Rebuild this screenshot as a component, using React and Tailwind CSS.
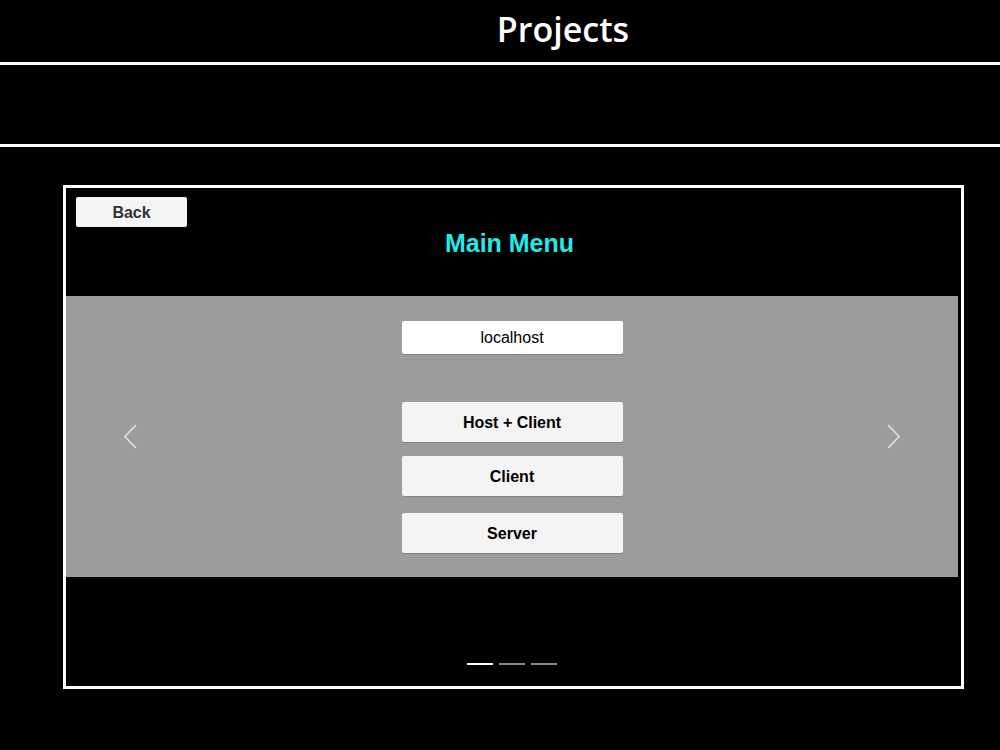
import React from "react";

function Chevron({ dir }) {
  // thin carousel arrow
  return (
    <svg width="14" height="25" viewBox="0 0 14 25" fill="none" className="shrink-0">
      <path
        d={dir === "left" ? "M12.5 1.5 L1.8 12.5 L12.5 23.5" : "M1.5 1.5 L12.2 12.5 L1.5 23.5"}
        stroke="#e4e4e4"
        strokeWidth="1.6"
        strokeLinecap="round"
        strokeLinejoin="round"
      />
    </svg>
  );
}

function MenuButton({ children, className = "" }) {
  return (
    <button
      className={
        "w-[221px] h-[40px] pt-[2px] rounded-[2px] bg-[#f4f4f4] text-black font-bold text-[16px] shadow-[0_1px_0_rgba(0,0,0,0.15)] " +
        className
      }
    >
      {children}
    </button>
  );
}

export default function App() {
  const slides = [true, false, false];

  return (
    <div className="min-h-[750px] w-full bg-black font-['Liberation_Sans',Arial,sans-serif]">
      {/* page header */}
      <div className="h-[62px] flex items-center justify-center pl-[126px]">
        <h1 className="font-['Open_Sans',sans-serif] font-semibold text-[34px] leading-none text-white pb-[4px]">
          Projects
        </h1>
      </div>
      <div className="h-[3px] bg-white" />
      <div className="h-[79px]" />
      <div className="h-[3px] bg-white" />

      {/* embedded player */}
      <div className="pt-[38px] pl-[63px]">
        <div className="w-[901px] h-[504px] border-[3px] border-white flex flex-col">
          {/* top bar */}
          <div className="h-[108px] flex flex-col">
            <button className="ml-[10px] mt-[9px] w-[111px] h-[30px] pt-[1px] rounded-[2px] bg-[#f4f4f4] text-[#333] font-bold text-[16px]">
              Back
            </button>
            <div className="mt-[2px] pr-[8px] text-center text-[25px] leading-[29px] font-bold text-[#22eaea]">
              Main Menu
            </div>
          </div>

          {/* carousel */}
          <div className="w-[892px] h-[281px] bg-[#9c9c9c] flex items-center justify-between px-[57px]">
            <Chevron dir="left" />
            <div className="h-full flex flex-col items-center pt-[25px]">
              <div className="w-[221px] h-[33px] pt-[1px] rounded-[2px] bg-white flex items-center justify-center text-[16px] text-black shadow-[0_1px_0_rgba(0,0,0,0.15)]">
                localhost
              </div>
              <MenuButton className="mt-[48px]">Host + Client</MenuButton>
              <MenuButton className="mt-[14px]">Client</MenuButton>
              <MenuButton className="mt-[17px]">Server</MenuButton>
            </div>
            <Chevron dir="right" />
          </div>

          {/* pager */}
          <div className="flex-1 flex justify-center gap-[6px] pt-[86px] pr-[3px]">
            {slides.map((on, i) => (
              <div key={i} className={"w-[26px] h-[2px] " + (on ? "bg-white" : "bg-[#8a8a8a]")} />
            ))}
          </div>
        </div>
      </div>
    </div>
  );
}
